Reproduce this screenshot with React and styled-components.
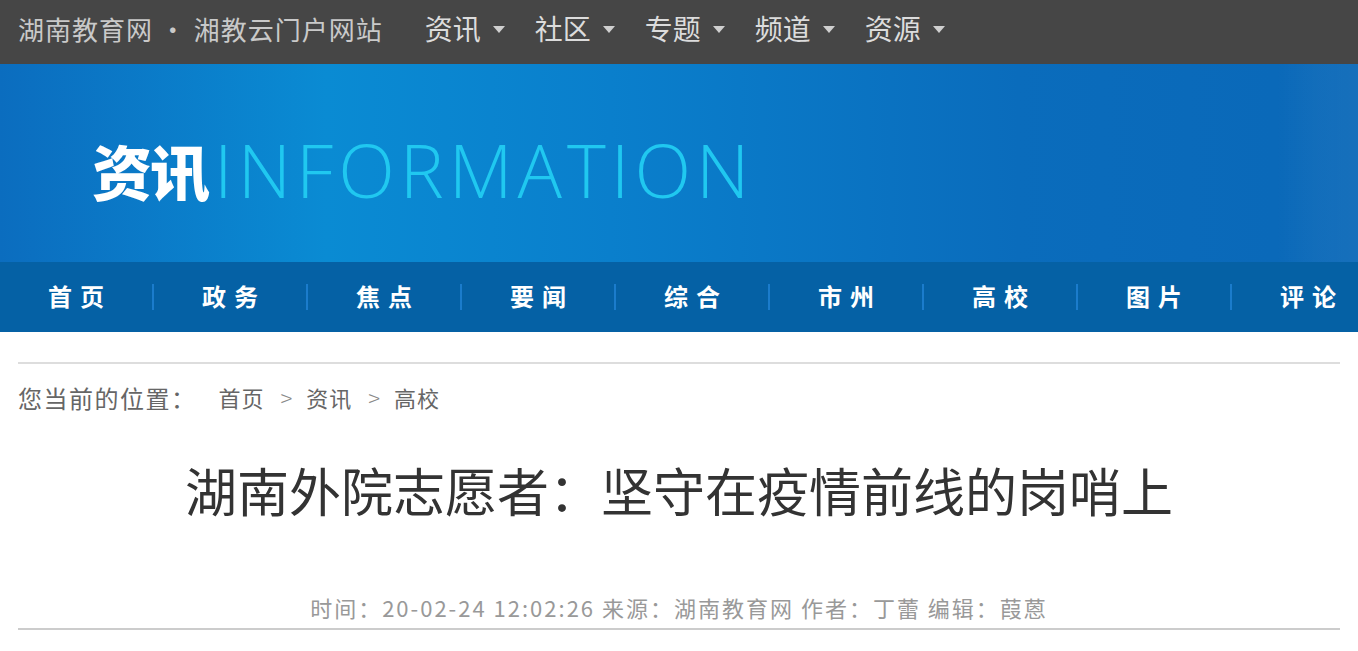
import React from "react";
import styled, { createGlobalStyle } from "styled-components";

const GlobalStyle = createGlobalStyle`
  body {
    margin: 0;
    background: #fff;
    font-family: "Noto Sans CJK SC", "Noto Sans", sans-serif;
  }
`;

const TopBar = styled.div`
  height: 64px;
  box-sizing: border-box;
  padding: 0 0 8px 18px;
  background: #464646;
  display: flex;
  align-items: center;
`;

const SiteName = styled.div`
  font-size: 26px;
  color: #c9c9c9;
  letter-spacing: 1px;
`;

const Menu = styled.div`
  display: flex;
  margin-left: 42px;
`;

const MenuItem = styled.div`
  display: flex;
  align-items: center;
  font-size: 28px;
  color: #dcdcdc;
  margin-right: 30px;
`;

const Caret = styled.span`
  width: 0;
  height: 0;
  margin-left: 12px;
  margin-top: 2px;
  border-left: 6px solid transparent;
  border-right: 6px solid transparent;
  border-top: 7px solid #cfcfcf;
`;

const Banner = styled.div`
  height: 198px;
  display: flex;
  align-items: center;
  padding-left: 92px;
  background:
    linear-gradient(to right, rgba(255, 255, 255, 0) 94%, rgba(255, 255, 255, 0.035) 97%, rgba(255, 255, 255, 0.05) 100%),
    linear-gradient(to right, #0b6dbf 0%, #0a8bd3 24%, #0a7fcc 45%, #0a6cbc 75%, #0a68b8 100%);
`;

const BannerCn = styled.div`
  font-size: 60px;
  font-weight: 900;
  color: #fff;
  letter-spacing: -2px;
  margin-top: 12px;
`;

const BannerEn = styled.div`
  font-family: "Open Sans", "Liberation Sans", sans-serif;
  font-size: 74px;
  font-weight: 300;
  color: #20c8f0;
  letter-spacing: 5px;
  margin-left: 6px;
  margin-top: 12px;
`;

const Nav = styled.div`
  height: 70px;
  background: #0561a5;
  display: flex;
  align-items: center;
`;

const NavItem = styled.div`
  flex: 0 0 152px;
  text-align: center;
  color: #fff;
  font-size: 24px;
  font-weight: 700;
  letter-spacing: 8px;
  padding-left: 8px;
  box-sizing: border-box;
  margin-top: -4px;
`;

const NavSep = styled.div`
  flex: 0 0 2px;
  height: 26px;
  background: #1b7ccc;
`;

const Content = styled.div`
  padding: 30px 18px 0;
`;

const Rule = styled.div`
  height: 2px;
  background: ${(p) => p.$color};
`;

const Breadcrumb = styled.div`
  height: 66px;
  display: flex;
  align-items: center;
  color: #666;
`;

const CrumbLabel = styled.span`
  font-size: 24px;
  letter-spacing: 1.5px;
  margin-right: 22px;
`;

const Crumb = styled.span`
  font-size: 22px;
  letter-spacing: 1px;
`;

const CrumbArrow = styled.span`
  font-size: 22px;
  font-weight: 300;
  color: #888;
  margin: 0 14px 0 16px;
`;

const Title = styled.h1`
  margin: 25px 0 0;
  text-align: center;
  font-size: 52px;
  line-height: 70px;
  font-weight: 400;
  color: #333;
`;

const Meta = styled.div`
  margin-top: 67px;
  text-align: center;
  font-size: 22px;
  letter-spacing: 2px;
  line-height: 30px;
  color: #999;
  margin-bottom: 6px;
`;

const menus = ["资讯", "社区", "专题", "频道", "资源"];
const navs = ["首页", "政务", "焦点", "要闻", "综合", "市州", "高校", "图片", "评论"];

export default function App() {
  return (
    <>
      <GlobalStyle />
      <TopBar>
        <SiteName>湖南教育网 • 湘教云门户网站</SiteName>
        <Menu>
          {menus.map((m) => (
            <MenuItem key={m}>
              {m}
              <Caret />
            </MenuItem>
          ))}
        </Menu>
      </TopBar>
      <Banner>
        <BannerCn>资讯</BannerCn>
        <BannerEn>INFORMATION</BannerEn>
      </Banner>
      <Nav>
        {navs.map((n, i) => (
          <React.Fragment key={n}>
            {i > 0 && <NavSep />}
            <NavItem>{n}</NavItem>
          </React.Fragment>
        ))}
      </Nav>
      <Content>
        <Rule $color="#dddddd" />
        <Breadcrumb>
          <CrumbLabel>您当前的位置：</CrumbLabel>
          <Crumb>首页</Crumb>
          <CrumbArrow>&gt;</CrumbArrow>
          <Crumb>资讯</Crumb>
          <CrumbArrow>&gt;</CrumbArrow>
          <Crumb>高校</Crumb>
        </Breadcrumb>
        <Title>湖南外院志愿者：坚守在疫情前线的岗哨上</Title>
        <Meta>时间：20-02-24 12:02:26 来源：湖南教育网 作者：丁蕾 编辑：葭蒽</Meta>
        <Rule $color="#cccccc" />
      </Content>
    </>
  );
}
